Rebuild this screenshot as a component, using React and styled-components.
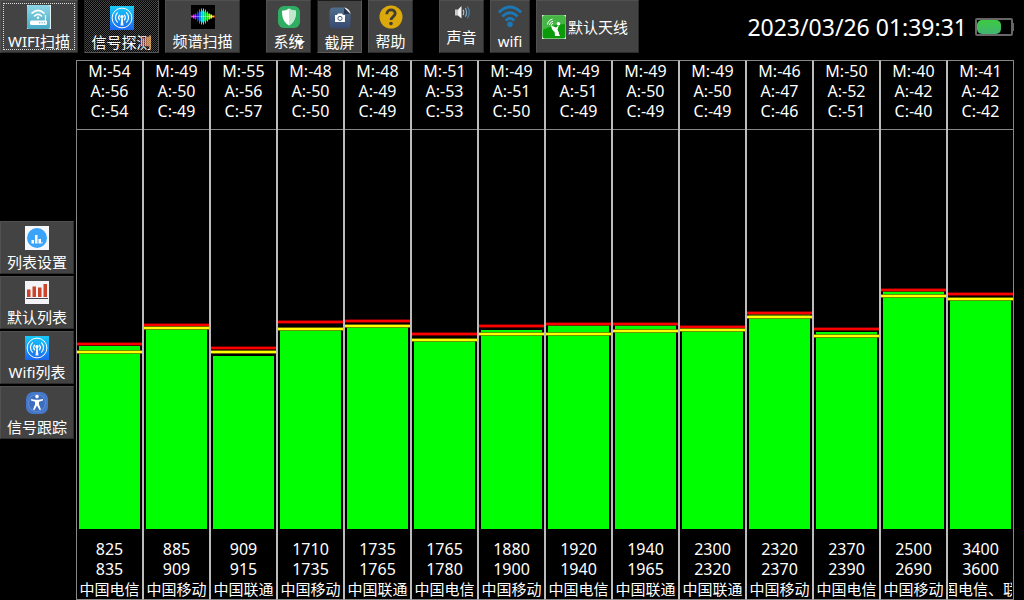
import React from "react";
import styled, { createGlobalStyle, css } from "styled-components";

const GlobalStyle = createGlobalStyle`
  * {
    box-sizing: border-box;
  }
  body {
    margin: 0;
    background: #000;
    color: #fff;
    font-family: "Noto Sans", "Noto Sans CJK SC", sans-serif;
    font-size: 15px;
  }
`;

const Page = styled.div`
  display: flex;
  flex-direction: column;
  min-height: 100vh;
`;
const TopBar = styled.header`
  display: flex;
  align-items: flex-start;
  height: 60px;
  flex: none;
`;
const Tools = styled.nav`
  display: flex;
  gap: 26px;
`;
const ToolGroup = styled.div`
  display: flex;
  gap: 6px;
`;

const pressed = css`
  border-color: #1c1c1c #5a5a5a #5a5a5a #1c1c1c;
  padding-top: 5px;
`;
const checked = css`
  border-color: #222 #555 #555 #222;
  background: repeating-conic-gradient(#000 0 25%, #484848 0 50%) 0 0 / 2px 2px;
`;

const ToolButton = styled.button`
  position: relative;
  display: flex;
  flex-direction: column;
  align-items: center;
  gap: 2px;
  width: ${({ $width }) => $width}px;
  height: 53px;
  padding: ${({ $raised }) => ($raised ? 0 : 4)}px 0 0;
  border: 1px solid;
  border-color: #505050 #2c2c2c #2c2c2c #505050;
  background: #434343;
  color: #fff;
  font: inherit;
  line-height: 20px;
  white-space: nowrap;
  ${({ $pressed }) => $pressed && pressed}
  ${({ $checked }) => $checked && checked}
  ${({ $focused }) =>
    $focused &&
    css`
      outline: 1px dotted #ddd;
      outline-offset: -4px;
    `}
`;
const AntennaButton = styled(ToolButton)`
  flex-direction: row;
  padding: 0 5px;
`;
const MenuArrow = styled.span`
  position: absolute;
  right: 5px;
  bottom: 6px;
  border: 5px solid transparent;
  border-top-color: #fff;
  border-bottom: none;
`;

const Status = styled.div`
  display: flex;
  align-items: center;
  gap: 8px;
  height: 53px;
  margin-left: auto;
  padding-right: 10px;
`;
const Clock = styled.time`
  font-size: 23px;
  line-height: 32px;
  white-space: nowrap;
`;

const Main = styled.main`
  display: flex;
  flex: 1;
  padding-right: 10px;
`;
const Side = styled.nav`
  display: flex;
  flex-direction: column;
  justify-content: center;
  gap: 2px;
  width: 76px;
  flex: none;
`;

const Chart = styled.section`
  display: grid;
  grid-template-columns: repeat(14, minmax(0, 1fr));
  flex: 1;
`;
const Channel = styled.article`
  display: flex;
  flex-direction: column;
  border: 1px solid #bcbcbc;
  border-top-color: #888;
  border-bottom-color: #888;
  font-size: 16px;
  line-height: 20px;
  text-align: center;
  &:first-child {
    border-left-color: #888;
  }
  &:last-child {
    border-right-color: #888;
  }
`;
const Levels = styled.div`
  padding-bottom: 8px;
  border-bottom: 1px solid #888;
`;
const Plot = styled.div`
  position: relative;
  flex: 1;
  min-height: 200px;
  padding: 0 2px;
  display: flex;
  align-items: flex-end;
`;
const Bar = styled.div`
  width: 100%;
  background: #0f0;
`;
const Mark = styled.div`
  position: absolute;
  left: 0;
  right: 0;
  height: 4px;
  margin-bottom: -2px;
  border: solid ${({ $edge }) => $edge};
  border-width: 1px 0;
  background: ${({ $color }) => $color} padding-box;
`;
const Band = styled.div`
  padding-top: 10px;
`;
const Operator = styled.div`
  display: flex;
  justify-content: center;
  margin: 0 1px;
  overflow: hidden;
  font-size: 15px;
  white-space: nowrap;
`;

function RouterIcon() {
  return (
    <svg width="24" height="24" viewBox="0 0 24 24">
      <defs>
        <linearGradient id="router" x1="0" y1="0" x2="0" y2="1">
          <stop offset="0" stopColor="#8fd6e6" />
          <stop offset="1" stopColor="#47abc6" />
        </linearGradient>
      </defs>
      <path d="M0 0h24v24H0z" fill="#e4f4f8" />
      <rect width="23" height="24" rx="2" fill="url(#router)" />
      <g fill="none" stroke="#fff" strokeWidth="1.6" strokeLinecap="round">
        <path d="M5 8.2Q11 2.6 17 8.2M7.5 11Q11 7.8 14.5 11" />
        <path d="M18.5 10.5V16" strokeWidth="1.2" />
      </g>
      <circle cx="11" cy="12.8" r="1.3" fill="#fff" />
      <rect x="3" y="15.5" width="17" height="4.5" rx="1.5" fill="#fff" />
      <path d="M12 17.8h1.3M14.5 17.8h1.3M17 17.8h1.3" stroke="#4aa9c4" />
    </svg>
  );
}

function SignalIcon() {
  return (
    <svg width="24" height="24" viewBox="0 0 24 24">
      <defs>
        <linearGradient id="signal" x1="0" y1="0" x2="0" y2="1">
          <stop offset="0" stopColor="#16cbfb" />
          <stop offset="1" stopColor="#1c66ee" />
        </linearGradient>
      </defs>
      <path d="M0 0h24v24H0z" fill="url(#signal)" />
      <g fill="none" stroke="#fff">
        <circle cx="12" cy="12" r="9.9" strokeWidth="1" />
        <path
          d="M7.4 16.2a6.7 6.7 0 0 1 0-9.4M16.6 16.2a6.7 6.7 0 0 0 0-9.4M9.6 13.8a3.5 3.5 0 0 1 0-4.7M14.4 13.8a3.5 3.5 0 0 0 0-4.7"
          strokeWidth="1.2"
          strokeLinecap="round"
        />
      </g>
      <circle cx="12" cy="10.8" r="1.7" fill="#fff" />
      <path d="M11.5 11h1l1 8.5h-3z" fill="#fff" />
    </svg>
  );
}

const WAVE = [1, 1, 2, 2, 3, 2, 5, 4, 7, 5, 8, 6, 8, 5, 7, 4, 5, 3, 3, 2, 2, 1, 1, 1];

function SpectrumIcon() {
  return (
    <svg width="24" height="24" viewBox="0 0 24 24">
      <path d="M0 0h24v24H0z" fill="#000" />
      {WAVE.map((h, i) => (
        <path
          key={i}
          d={`M${i + 0.5} ${11.5 - h}v${h * 2}`}
          stroke={`hsl(${(320 - i * 13 + 360) % 360} 95% ${i % 2 ? 42 : 58}%)`}
        />
      ))}
      <path d="M1 11.5h22" stroke="#fff" strokeOpacity=".35" />
    </svg>
  );
}

function ShieldIcon() {
  return (
    <svg width="24" height="24" viewBox="0 0 24 24">
      <rect x="1" y="1" width="22" height="22" rx="6" fill="#2fae63" />
      <path d="M12 3.5c2.3 1.6 4.6 2.2 7 2.3 0 7-1.6 11.6-7 14.7-5.4-3.1-7-7.7-7-14.7 2.4-.1 4.7-.7 7-2.3z" fill="#fff" />
      <path d="M12 3.5c2.3 1.6 4.6 2.2 7 2.3 0 7-1.6 11.6-7 14.7z" fill="#bfe8cd" />
    </svg>
  );
}

function CaptureIcon() {
  return (
    <svg width="24" height="24" viewBox="0 0 24 24">
      <defs>
        <linearGradient id="capture" x1="0" y1="0" x2="0" y2="1">
          <stop offset="0" stopColor="#4f6f8e" />
          <stop offset="1" stopColor="#39496f" />
        </linearGradient>
      </defs>
      <path d="M5 1.5h11l6.5 6.5v10a4 4 0 0 1-4 4.5H5.500a4 4 0 0 1-4-4V5.500a4 4 0 0 1 3.500-4z" fill="url(#capture)" />
      <path d="M16 1.5V8h6.5z" fill="#26334a" />
      <path d="M16 1.5c3 .3 6 2.5 6.5 6.5z" fill="#f2f4f7" />
      <path d="M7 9h2l1-1.5h4L15 9h2v7H7z" fill="#fff" />
      <circle cx="12" cy="12.4" r="2.1" fill="#fff" stroke="#47618a" />
    </svg>
  );
}

function HelpIcon() {
  return (
    <svg width="24" height="24" viewBox="0 0 24 24">
      <circle cx="12" cy="12" r="11.5" fill="#dba90c" />
      <path d="M7.8 9.3c0-6 8.7-5.4 8.4-.6-.2 2.9-4.1 2.9-4.1 6.3" fill="none" stroke="#403c34" strokeWidth="2.8" />
      <circle cx="12" cy="18.6" r="1.8" fill="#403c34" />
    </svg>
  );
}

function SoundIcon() {
  return (
    <svg width="24" height="24" viewBox="0 1 24 24">
      <path d="M5 9.5h3v6H5z" fill="#c9c9c9" />
      <path d="M8 9.5l3.5-3.5v12.5L8 15.5z" fill="#f4f4f4" />
      <g fill="none" strokeWidth="1.2" strokeLinecap="round">
        <path d="M13.3 10.2q1.2 2.2 0 4.4" stroke="#b7cbd8" />
        <path d="M15.5 8.5q2.2 3.9 0 7.8" stroke="#82a9c3" />
        <path d="M17.6 7q3.3 5.4 0 10.8" stroke="#4c87ad" />
      </g>
    </svg>
  );
}

function WifiIcon() {
  return (
    <svg width="24" height="24" viewBox="0 0 24 24">
      <g fill="none" stroke="#1c77b5" strokeWidth="2.8">
        <path d="M.9 7.4Q12-3.600 23.1 7.4" />
        <path d="M4.3 11.6Q12 3.900 19.700 11.6" />
        <path d="M7.7 15.6Q12 10.900 16.300 15.6" />
      </g>
      <circle cx="12" cy="19.2" r="2.8" fill="#1c77b5" />
    </svg>
  );
}

function AntennaIcon() {
  return (
    <svg width="24" height="24" viewBox="0 0 24 24">
      <path d="M0 0h24v24H0z" fill="#d9f0d9" />
      <rect x=".5" y=".5" width="23" height="23" rx="2" fill="#0a9a0a" />
      <path d="M.5 2.5a2 2 0 0 1 2-2h19a2 2 0 0 1 2 2V9Q12 9 .5 15z" fill="#45b545" />
      <g fill="none" stroke="#fff">
        <path d="M5.5 9.5q.3-4 5-5.500M7.300 10q.4-2.800 3.700-3.800M9 10.500q.3-1.600 2-2.200" />
      </g>
      <path d="M9 10.5q1 7.500 8 7.500l-1.500-3.500 1.500-4.500-3 2.500z" fill="#fff" />
      <path d="M12.5 15.500h3l2.500 5.500h-5z" fill="#fff" />
      <circle cx="16.5" cy="8.8" r="1.8" fill="#fff" />
    </svg>
  );
}

function ListSettingsIcon() {
  return (
    <svg width="24" height="24" viewBox="0 0 24 24">
      <path d="M0 0h24v24H0z" fill="#f7f8fc" />
      <circle cx="12" cy="12" r="10" fill="#3ba3f8" />
      <path d="M6.5 17.5V14H9v3.500zM10 17.5V9h2.500v8.500zM13.500 17.500V13H16v4.500zM16.500 17.500V16h1v1.500z" fill="#fff" />
    </svg>
  );
}

function DefaultListIcon() {
  return (
    <svg width="24" height="24" viewBox="0 0 24 24">
      <path d="M0 0h24v23H0z" fill="#f4f3f8" />
      <path d="M2 16V8.500h3.500V16zM7.500 16V5.500H11V16zM13 16V6.500h3.500V16zM18.500 16V3H22v13z" fill="#cc452b" />
      <path d="M1 17.5h22" stroke="#45414d" />
    </svg>
  );
}

function TrackIcon() {
  return (
    <svg width="24" height="24" viewBox="0 0 24 24">
      <rect x="1" y="1" width="22" height="22" rx="7" fill="#4677c8" />
      <circle cx="12" cy="12" r="8.5" fill="#3f6dbd" stroke="#5f8cd6" />
      <circle cx="12" cy="5.6" r="1.8" fill="#fff" />
      <path d="M6 8l4.500.8h3L18 8v1.500l-4 1.300v2.700l2 5-1.500.5L12 14.500 9.500 19 8 18.500l2-5v-2.700L6 9.500z" fill="#fff" />
    </svg>
  );
}

function Battery() {
  return (
    <svg width="39" height="18" viewBox="0 0 39 18" role="img" aria-label="battery">
      <defs>
        <linearGradient id="charge" x1="0" y1="0" x2="0" y2="1">
          <stop offset="0" stopColor="#3ccb40" />
          <stop offset="1" stopColor="#42b473" />
        </linearGradient>
      </defs>
      <rect x="1" y="1" width="36" height="16" rx="1" fill="none" stroke="#676767" strokeWidth="2" />
      <path d="M38 5h1v8h-1z" fill="#676767" />
      <rect x="2" y="2" width="24" height="14" rx="5" fill="url(#charge)" />
    </svg>
  );
}

// max / average / current level in dBm
const channels = [
  { from: 825, to: 835, operator: "中国电信", max: -53.6, avg: -55.6, cur: -54.1 },
  { from: 885, to: 909, operator: "中国移动", max: -48.9, avg: -49.6, cur: -49.4 },
  { from: 909, to: 915, operator: "中国联通", max: -54.6, avg: -55.6, cur: -56.6 },
  { from: 1710, to: 1735, operator: "中国移动", max: -48.1, avg: -49.9, cur: -50.1 },
  { from: 1735, to: 1765, operator: "中国联通", max: -47.9, avg: -49.1, cur: -49.4 },
  { from: 1765, to: 1780, operator: "中国电信", max: -51.1, avg: -52.6, cur: -52.9 },
  { from: 1880, to: 1900, operator: "中国移动", max: -49.1, avg: -51.1, cur: -50.1 },
  { from: 1920, to: 1940, operator: "中国电信", max: -48.6, avg: -51.1, cur: -48.9 },
  { from: 1940, to: 1965, operator: "中国联通", max: -48.6, avg: -50.4, cur: -48.9 },
  { from: 2300, to: 2320, operator: "中国联通", max: -49.4, avg: -50.1, cur: -49.4 },
  { from: 2320, to: 2370, operator: "中国移动", max: -45.9, avg: -46.9, cur: -46.1 },
  { from: 2370, to: 2390, operator: "中国电信", max: -49.9, avg: -51.6, cur: -50.6 },
  { from: 2500, to: 2690, operator: "中国移动", max: -40.1, avg: -41.6, cur: -40.4 },
  { from: 3400, to: 3600, operator: "中国电信、联通", max: -41.1, avg: -42.4, cur: -42.4 },
];

const toPercent = (dbm) => `${(100 + dbm).toFixed(1)}%`;

function ChannelColumn({ from, to, operator, max, avg, cur }) {
  return (
    <Channel>
      <Levels>
        <div>M:{Math.round(max)}</div>
        <div>A:{Math.round(avg)}</div>
        <div>C:{Math.round(cur)}</div>
      </Levels>
      <Plot>
        <Bar style={{ height: toPercent(cur) }} />
        <Mark $color="#f00" $edge="rgba(128, 0, 0, 0.8)" style={{ bottom: toPercent(max) }} />
        <Mark $color="#ff0" $edge="rgba(128, 128, 0, 0.8)" style={{ bottom: toPercent(avg) }} />
      </Plot>
      <Band>
        <div>{from}</div>
        <div>{to}</div>
        <Operator>
          <span>{operator}</span>
        </Operator>
      </Band>
    </Channel>
  );
}

function App() {
  return (
    <Page>
      <GlobalStyle />
      <TopBar>
        <Tools>
          <ToolGroup>
            <ToolButton $width={78} $focused><RouterIcon />WIFI扫描</ToolButton>
            <ToolButton $width={75} $pressed $checked><SignalIcon />信号探测</ToolButton>
            <ToolButton $width={75}><SpectrumIcon />频谱扫描</ToolButton>
          </ToolGroup>
          <ToolGroup>
            <ToolButton $width={45}><ShieldIcon />系统<MenuArrow /></ToolButton>
            <ToolButton $width={45} $pressed><CaptureIcon />截屏</ToolButton>
            <ToolButton $width={45}><HelpIcon />帮助</ToolButton>
          </ToolGroup>
          <ToolGroup>
            <ToolButton $width={45} $raised><SoundIcon />声音</ToolButton>
            <ToolButton $width={40}><WifiIcon />wifi</ToolButton>
            <AntennaButton $width={103}><AntennaIcon />默认天线</AntennaButton>
          </ToolGroup>
        </Tools>
        <Status>
          <Clock dateTime="2023-03-26T01:39:31">2023/03/26 01:39:31</Clock>
          <Battery />
        </Status>
      </TopBar>
      <Main>
        <Side>
          <ToolButton $width={74}><ListSettingsIcon />列表设置</ToolButton>
          <ToolButton $width={74}><DefaultListIcon />默认列表</ToolButton>
          <ToolButton $width={74}><SignalIcon />Wifi列表</ToolButton>
          <ToolButton $width={74}><TrackIcon />信号跟踪</ToolButton>
        </Side>
        <Chart>
          {channels.map((channel) => (
            <ChannelColumn key={channel.from} {...channel} />
          ))}
        </Chart>
      </Main>
    </Page>
  );
}

export default App;
